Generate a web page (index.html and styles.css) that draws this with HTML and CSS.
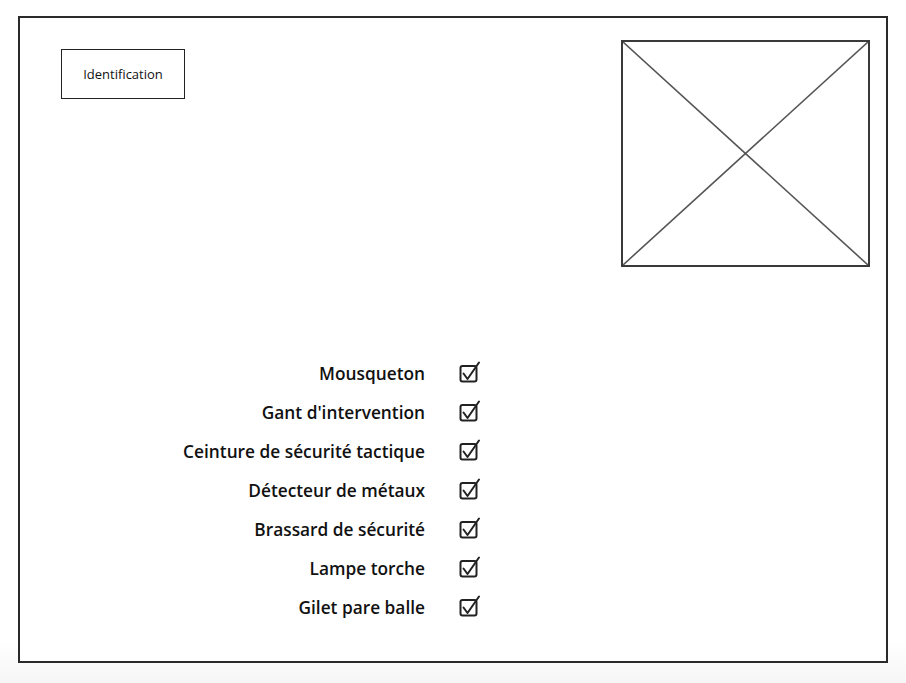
FILE: index.html
```html
<!DOCTYPE html>
<html lang="fr">
<head>
<meta charset="utf-8">
<title>Identification</title>
<link rel="stylesheet" href="styles.css">
</head>
<body>
<div class="frame">
  <div class="header">
    <div class="id-box">Identification</div>
    <div class="placeholder">
      <svg viewBox="0 0 246 224" preserveAspectRatio="none" class="xlines">
        <line x1="0" y1="0" x2="246" y2="224"/>
        <line x1="246" y1="0" x2="0" y2="224"/>
      </svg>
    </div>
  </div>
  <div class="list">
    <div class="label">Mousqueton</div>
    <svg class="check" viewBox="0 0 22 22"><rect x="1.5" y="5" width="16" height="15.5" rx="2"/><path d="M4.5 12.5 L8.5 18 L20 1.5"/></svg>
    <div class="label">Gant d'intervention</div>
    <svg class="check" viewBox="0 0 22 22"><rect x="1.5" y="5" width="16" height="15.5" rx="2"/><path d="M4.5 12.5 L8.5 18 L20 1.5"/></svg>
    <div class="label">Ceinture de sécurité tactique</div>
    <svg class="check" viewBox="0 0 22 22"><rect x="1.5" y="5" width="16" height="15.5" rx="2"/><path d="M4.5 12.5 L8.5 18 L20 1.5"/></svg>
    <div class="label">Détecteur de métaux</div>
    <svg class="check" viewBox="0 0 22 22"><rect x="1.5" y="5" width="16" height="15.5" rx="2"/><path d="M4.5 12.5 L8.5 18 L20 1.5"/></svg>
    <div class="label">Brassard de sécurité</div>
    <svg class="check" viewBox="0 0 22 22"><rect x="1.5" y="5" width="16" height="15.5" rx="2"/><path d="M4.5 12.5 L8.5 18 L20 1.5"/></svg>
    <div class="label">Lampe torche</div>
    <svg class="check" viewBox="0 0 22 22"><rect x="1.5" y="5" width="16" height="15.5" rx="2"/><path d="M4.5 12.5 L8.5 18 L20 1.5"/></svg>
    <div class="label">Gilet pare balle</div>
    <svg class="check" viewBox="0 0 22 22"><rect x="1.5" y="5" width="16" height="15.5" rx="2"/><path d="M4.5 12.5 L8.5 18 L20 1.5"/></svg>
  </div>
</div>
</body>
</html>
```

FILE: styles.css
```css
html, body {
  margin: 0;
  padding: 0;
}
body {
  width: 906px;
  height: 683px;
  overflow: hidden;
  background: linear-gradient(to bottom, #ffffff 0px, #ffffff 640px, #f6f6f6 683px);
  font-family: "Open Sans", "Noto Sans", sans-serif;
  color: #111;
}
.frame {
  box-sizing: border-box;
  margin: 16px 0 0 18px;
  width: 870px;
  height: 647px;
  border: 2px solid #2a2a2a;
  background: #fff;
}
.header {
  display: flex;
  justify-content: space-between;
  align-items: flex-start;
  padding: 22px 16px 0 41px;
}
.id-box {
  box-sizing: border-box;
  margin-top: 9px;
  width: 124px;
  height: 50px;
  border: 1.5px solid #222;
  display: flex;
  align-items: center;
  justify-content: center;
  font-size: 13px;
  color: #111;
}
.placeholder {
  box-sizing: border-box;
  width: 249px;
  height: 227px;
  border: 2px solid #3a3a3a;
}
.xlines {
  display: block;
  width: 100%;
  height: 100%;
}
.xlines line {
  stroke: #555;
  stroke-width: 1.6;
}
.list {
  display: grid;
  grid-template-columns: 405px 22px;
  column-gap: 34px;
  grid-auto-rows: 39px;
  align-items: center;
  margin-top: 87px;
}
.label {
  text-align: right;
  font-weight: 600;
  font-size: 17.3px;
  color: #111;
}
.check {
  width: 22px;
  height: 22px;
  margin-top: -4px;
}
.check rect, .check path {
  fill: none;
  stroke: #222;
  stroke-width: 2;
  stroke-linejoin: round;
  stroke-linecap: round;
}
```
